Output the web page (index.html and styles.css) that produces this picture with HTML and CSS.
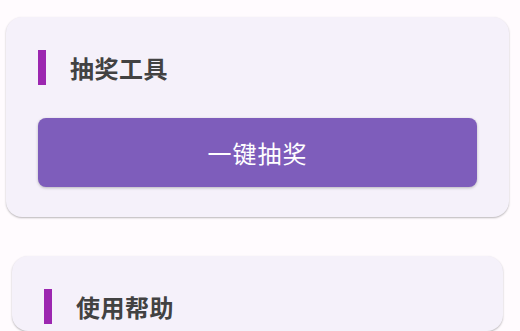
FILE: index.html
```html
<!DOCTYPE html>
<html lang="zh">
<head>
<meta charset="utf-8">
<title>抽奖工具</title>
<link rel="stylesheet" href="styles.css">
</head>
<body>
<main class="page">
  <section class="card card-main">
    <div class="card-header">
      <span class="accent"></span>
      <h2 class="title">抽奖工具</h2>
    </div>
    <button class="draw-btn" type="button">一键抽奖</button>
  </section>
  <section class="card card-help">
    <div class="card-header">
      <span class="accent"></span>
      <h2 class="title">使用帮助</h2>
    </div>
  </section>
</main>
</body>
</html>
```
FILE: styles.css
```css
html, body {
  margin: 0;
  padding: 0;
  background: #fffbfe;
  font-family: "Noto Sans CJK SC", "Noto Sans", sans-serif;
  overflow: hidden;
}
.page {
  display: flex;
  flex-direction: column;
  gap: 39px;
  padding: 17px 11px 0 6px;
  height: 331px;
  box-sizing: border-box;
  overflow: hidden;
}
.card {
  background: #f5f1fa;
  border-radius: 16px;
  box-shadow: 0 1px 2px rgba(0, 0, 0, 0.28);
  padding: 33px 32px 30px;
  display: flex;
  flex-direction: column;
  gap: 33px;
}
.card-help {
  margin: 0 6px;
  flex: 1;
  padding-bottom: 0;
}
.card-header {
  display: flex;
  align-items: center;
  gap: 24px;
  height: 35px;
}
.accent {
  width: 8px;
  height: 35px;
  background: #9c27b0;
  flex: none;
}
.title {
  margin: 0;
  font-size: 24px;
  font-weight: 700;
  color: #424242;
  line-height: 35px;
  letter-spacing: 0.5px;
}
.draw-btn {
  height: 69px;
  border: none;
  border-radius: 8px;
  background: #7e5dbb;
  color: #ffffff;
  font-family: inherit;
  font-size: 24px;
  letter-spacing: 1px;
  box-shadow: 0 1px 3px rgba(0, 0, 0, 0.25);
  padding: 0;
}
```
